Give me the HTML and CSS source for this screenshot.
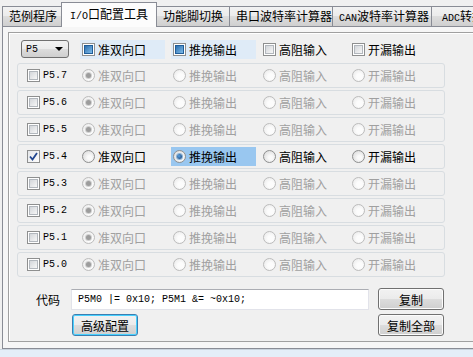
FILE: index.html
```html
<!DOCTYPE html>
<html lang="zh-CN">
<head>
    <meta charset="UTF-8">
    <title>I/O口配置工具</title>
    <link rel="stylesheet" href="styles.css">
</head>
<body>
    <div class="tabs">
        <div class="tab">范例程序</div>
        <div class="tab active"><span class="lat">I/O</span>口配置工具</div>
        <div class="tab">功能脚切换</div>
        <div class="tab">串口波特率计算器</div>
        <div class="tab"><span class="lat">CAN</span>波特率计算器</div>
        <div class="tab"><span class="lat">ADC</span>转换计算器</div>
    </div>

    <div class="panel">
        <div class="group">
            <div class="top-row">
                <div class="combo"><span class="lat">P5</span><span class="arrow"></span></div>
                <div class="opt lit"><span class="cb mixed"></span>准双向口</div>
                <div class="opt lit"><span class="cb mixed"></span>推挽输出</div>
                <div class="opt"><span class="cb"></span>高阻输入</div>
                <div class="opt"><span class="cb"></span>开漏输出</div>
            </div>

            <div class="pins">
                <div class="pin off">
                    <div class="pin-name"><span class="cb"></span><span class="lat">P5.7</span></div>
                    <div class="opt"><span class="rb on"></span>准双向口</div>
                    <div class="opt"><span class="rb"></span>推挽输出</div>
                    <div class="opt"><span class="rb"></span>高阻输入</div>
                    <div class="opt"><span class="rb"></span>开漏输出</div>
                </div>
                <div class="pin off">
                    <div class="pin-name"><span class="cb"></span><span class="lat">P5.6</span></div>
                    <div class="opt"><span class="rb on"></span>准双向口</div>
                    <div class="opt"><span class="rb"></span>推挽输出</div>
                    <div class="opt"><span class="rb"></span>高阻输入</div>
                    <div class="opt"><span class="rb"></span>开漏输出</div>
                </div>
                <div class="pin off">
                    <div class="pin-name"><span class="cb"></span><span class="lat">P5.5</span></div>
                    <div class="opt"><span class="rb on"></span>准双向口</div>
                    <div class="opt"><span class="rb"></span>推挽输出</div>
                    <div class="opt"><span class="rb"></span>高阻输入</div>
                    <div class="opt"><span class="rb"></span>开漏输出</div>
                </div>
                <div class="pin">
                    <div class="pin-name">
                        <span class="cb checked">
                            <svg width="9" height="9" viewBox="0 0 9 9"><path d="M1 4.5 L3.5 7.5 L8 1" fill="none" stroke="#21468f" stroke-width="1.8"/></svg>
                        </span><span class="lat">P5.4</span>
                    </div>
                    <div class="opt"><span class="rb"></span>准双向口</div>
                    <div class="opt sel"><span class="rb on"></span>推挽输出</div>
                    <div class="opt"><span class="rb"></span>高阻输入</div>
                    <div class="opt"><span class="rb"></span>开漏输出</div>
                </div>
                <div class="pin off">
                    <div class="pin-name"><span class="cb"></span><span class="lat">P5.3</span></div>
                    <div class="opt"><span class="rb on"></span>准双向口</div>
                    <div class="opt"><span class="rb"></span>推挽输出</div>
                    <div class="opt"><span class="rb"></span>高阻输入</div>
                    <div class="opt"><span class="rb"></span>开漏输出</div>
                </div>
                <div class="pin off">
                    <div class="pin-name"><span class="cb"></span><span class="lat">P5.2</span></div>
                    <div class="opt"><span class="rb on"></span>准双向口</div>
                    <div class="opt"><span class="rb"></span>推挽输出</div>
                    <div class="opt"><span class="rb"></span>高阻输入</div>
                    <div class="opt"><span class="rb"></span>开漏输出</div>
                </div>
                <div class="pin off">
                    <div class="pin-name"><span class="cb"></span><span class="lat">P5.1</span></div>
                    <div class="opt"><span class="rb on"></span>准双向口</div>
                    <div class="opt"><span class="rb"></span>推挽输出</div>
                    <div class="opt"><span class="rb"></span>高阻输入</div>
                    <div class="opt"><span class="rb"></span>开漏输出</div>
                </div>
                <div class="pin off">
                    <div class="pin-name"><span class="cb"></span><span class="lat">P5.0</span></div>
                    <div class="opt"><span class="rb on"></span>准双向口</div>
                    <div class="opt"><span class="rb"></span>推挽输出</div>
                    <div class="opt"><span class="rb"></span>高阻输入</div>
                    <div class="opt"><span class="rb"></span>开漏输出</div>
                </div>
            </div>

            <div class="code">
                <span class="code-label">代码</span>
                <div class="code-box lat">P5M0 |= 0x10; P5M1 &amp;= ~0x10;</div>
                <button class="btn">复制</button>
                <button class="btn focus adv">高级配置</button>
                <button class="btn all">复制全部</button>
            </div>
        </div>
    </div>

    <div class="status"></div>
</body>
</html>
```

FILE: styles.css
```css
html, body {
    overflow: hidden;
}

body {
    margin: 0;
    width: 473px;
    height: 357px;
    background: #f0f0f0;
    font-family: "Noto Sans CJK SC", sans-serif;
    font-size: 12px;
    color: #000;
}

.lat {
    font-family: "Liberation Mono", "Noto Sans CJK SC", monospace;
    font-size: 10px;
}

/* tab strip */
.tabs {
    display: flex;
    align-items: flex-end;
    height: 26px;
    padding-left: 2px;
    width: 560px;
}

.tab {
    box-sizing: border-box;
    height: 20px;
    line-height: 18px;
    padding: 0 6px;
    border: 1px solid #898c95;
    border-bottom: none;
    margin-right: -1px;
    background: linear-gradient(#f2f2f2, #ebebeb 50%, #dddddd 50%, #cfcfcf);
    white-space: nowrap;
    text-align: center;
}

.tab:nth-child(1) { width: 61px; }
.tab:nth-child(2) { width: 94px; }
.tab:nth-child(3) { width: 74px; }
.tab:nth-child(4) { width: 104px; }
.tab:nth-child(5) { width: 100px; }
.tab:nth-child(6) { width: 100px; }

.tab.active {
    height: 25px;
    line-height: 22px;
    margin: 0 -1px -1px -1px;
    position: relative;
    z-index: 1;
    background: #fcfcfc;
    width: 96px;
}

/* page */
.panel {
    box-sizing: border-box;
    margin-left: 2px;
    width: 520px;
    height: 323px;
    border: 1px solid #898c95;
    background: #f6f6f6;
    padding: 5px;
}

.group {
    box-sizing: border-box;
    height: 310px;
    border: 1px solid #a0a0a0;
    box-shadow: inset 1px 1px 0 #fff;
    background: #f0f0f0;
}

.top-row {
    display: grid;
    grid-template-columns: 59px 91px 90px 89px 90px;
    align-items: center;
    height: 20px;
    margin-top: 6px;
    padding-left: 12px;
}

.combo {
    box-sizing: border-box;
    width: 48px;
    height: 18px;
    border: 1px solid #707070;
    border-radius: 3px;
    background: linear-gradient(#f2f2f2, #ebebeb 50%, #dddddd 50%, #cfcfcf);
    display: flex;
    align-items: center;
    justify-content: space-between;
    padding: 0 5px 0 4px;
}

.arrow {
    width: 0;
    height: 0;
    border-left: 4px solid transparent;
    border-right: 4px solid transparent;
    border-top: 4px solid #000;
}

.opt {
    display: flex;
    align-items: center;
    gap: 3px;
    box-sizing: border-box;
    width: 85px;
    height: 19px;
    padding-left: 2px;
    white-space: nowrap;
}

.opt.lit {
    background: #dfebf7;
}

.opt.sel {
    background: #99c7f0;
}

/* check boxes */
.cb {
    box-sizing: border-box;
    flex: none;
    width: 13px;
    height: 13px;
    border: 1px solid #8e8f8f;
    background: #fff;
    padding: 1px;
    display: flex;
    align-items: center;
    justify-content: center;
}

.cb::before {
    content: "";
    display: block;
    width: 9px;
    height: 9px;
    box-sizing: border-box;
    border: 1px solid #b2b7bd;
    background: linear-gradient(135deg, #d3d6da, #f7f7f7);
}

.cb.mixed::before {
    border-color: #1f5d99;
    background: linear-gradient(135deg, #2c6fb0, #7dbbe9);
}

.cb.checked::before {
    display: none;
}

.cb.checked {
    background: linear-gradient(135deg, #e4e6e9, #fdfdfd);
    padding: 0;
}

/* radio buttons */
.rb {
    box-sizing: border-box;
    flex: none;
    width: 13px;
    height: 13px;
    border-radius: 50%;
    border: 1px solid #8e8f8f;
    background: radial-gradient(circle at 60% 60%, #fafafa 20%, #d4d4d4);
    display: flex;
    align-items: center;
    justify-content: center;
}

.rb.on::after {
    content: "";
    width: 5px;
    height: 5px;
    border-radius: 50%;
    background: radial-gradient(circle at 40% 40%, #5aa0e0, #123a6e);
    box-shadow: 0 0 0 1px #8bb3d6;
}

/* pin rows */
.pins {
    margin: 4px 0 0 8px;
    display: flex;
    flex-direction: column;
    gap: 2px;
}

.pin {
    box-sizing: border-box;
    width: 428px;
    height: 25px;
    border: 1px solid #d8dde1;
    border-radius: 3px;
    display: grid;
    grid-template-columns: 53px 91px 90px 89px 90px;
    align-items: center;
    padding-left: 9px;
}

.pin-name {
    display: flex;
    align-items: center;
    gap: 3px;
}

.pin.off .opt {
    color: #a0a0a0;
}

.pin.off .rb {
    border-color: #bcbcbc;
    background: radial-gradient(circle at 60% 60%, #fcfcfc 30%, #e6e6e6);
}

.pin.off .rb.on::after {
    background: #9c9c9c;
    box-shadow: 0 0 0 1px #d0d0d0;
}

/* code area */
.code {
    display: grid;
    grid-template-columns: 62px 307px 66px;
    grid-template-rows: 22px 22px;
    row-gap: 4px;
    align-items: center;
    margin-top: 11px;
}

.code-label {
    text-align: right;
    padding-right: 11px;
}

.code-box {
    box-sizing: border-box;
    width: 298px;
    height: 21px;
    line-height: 19px;
    border: 1px solid #e2e3ea;
    border-top-color: #abadb3;
    background: #fff;
    padding-left: 6px;
    white-space: nowrap;
}

.btn {
    box-sizing: border-box;
    width: 66px;
    height: 22px;
    padding: 0;
    border: 1px solid #707070;
    border-radius: 3px;
    background: linear-gradient(#f2f2f2, #ebebeb 50%, #dddddd 50%, #cfcfcf);
    box-shadow: inset 0 0 0 1px #fcfcfc;
    font-family: "Noto Sans CJK SC", sans-serif;
    font-size: 12px;
    color: #000;
}

.btn.focus {
    border-color: #3c7fb1;
    box-shadow: inset 0 0 0 1px #48d1ff;
}

.adv {
    grid-column: 2;
    margin-left: 1px;
}

.all {
    grid-column: 3;
}

.status {
    box-sizing: border-box;
    height: 8px;
    border-top: 1px solid #c9d3dd;
    background: #e4eef8;
}
```
